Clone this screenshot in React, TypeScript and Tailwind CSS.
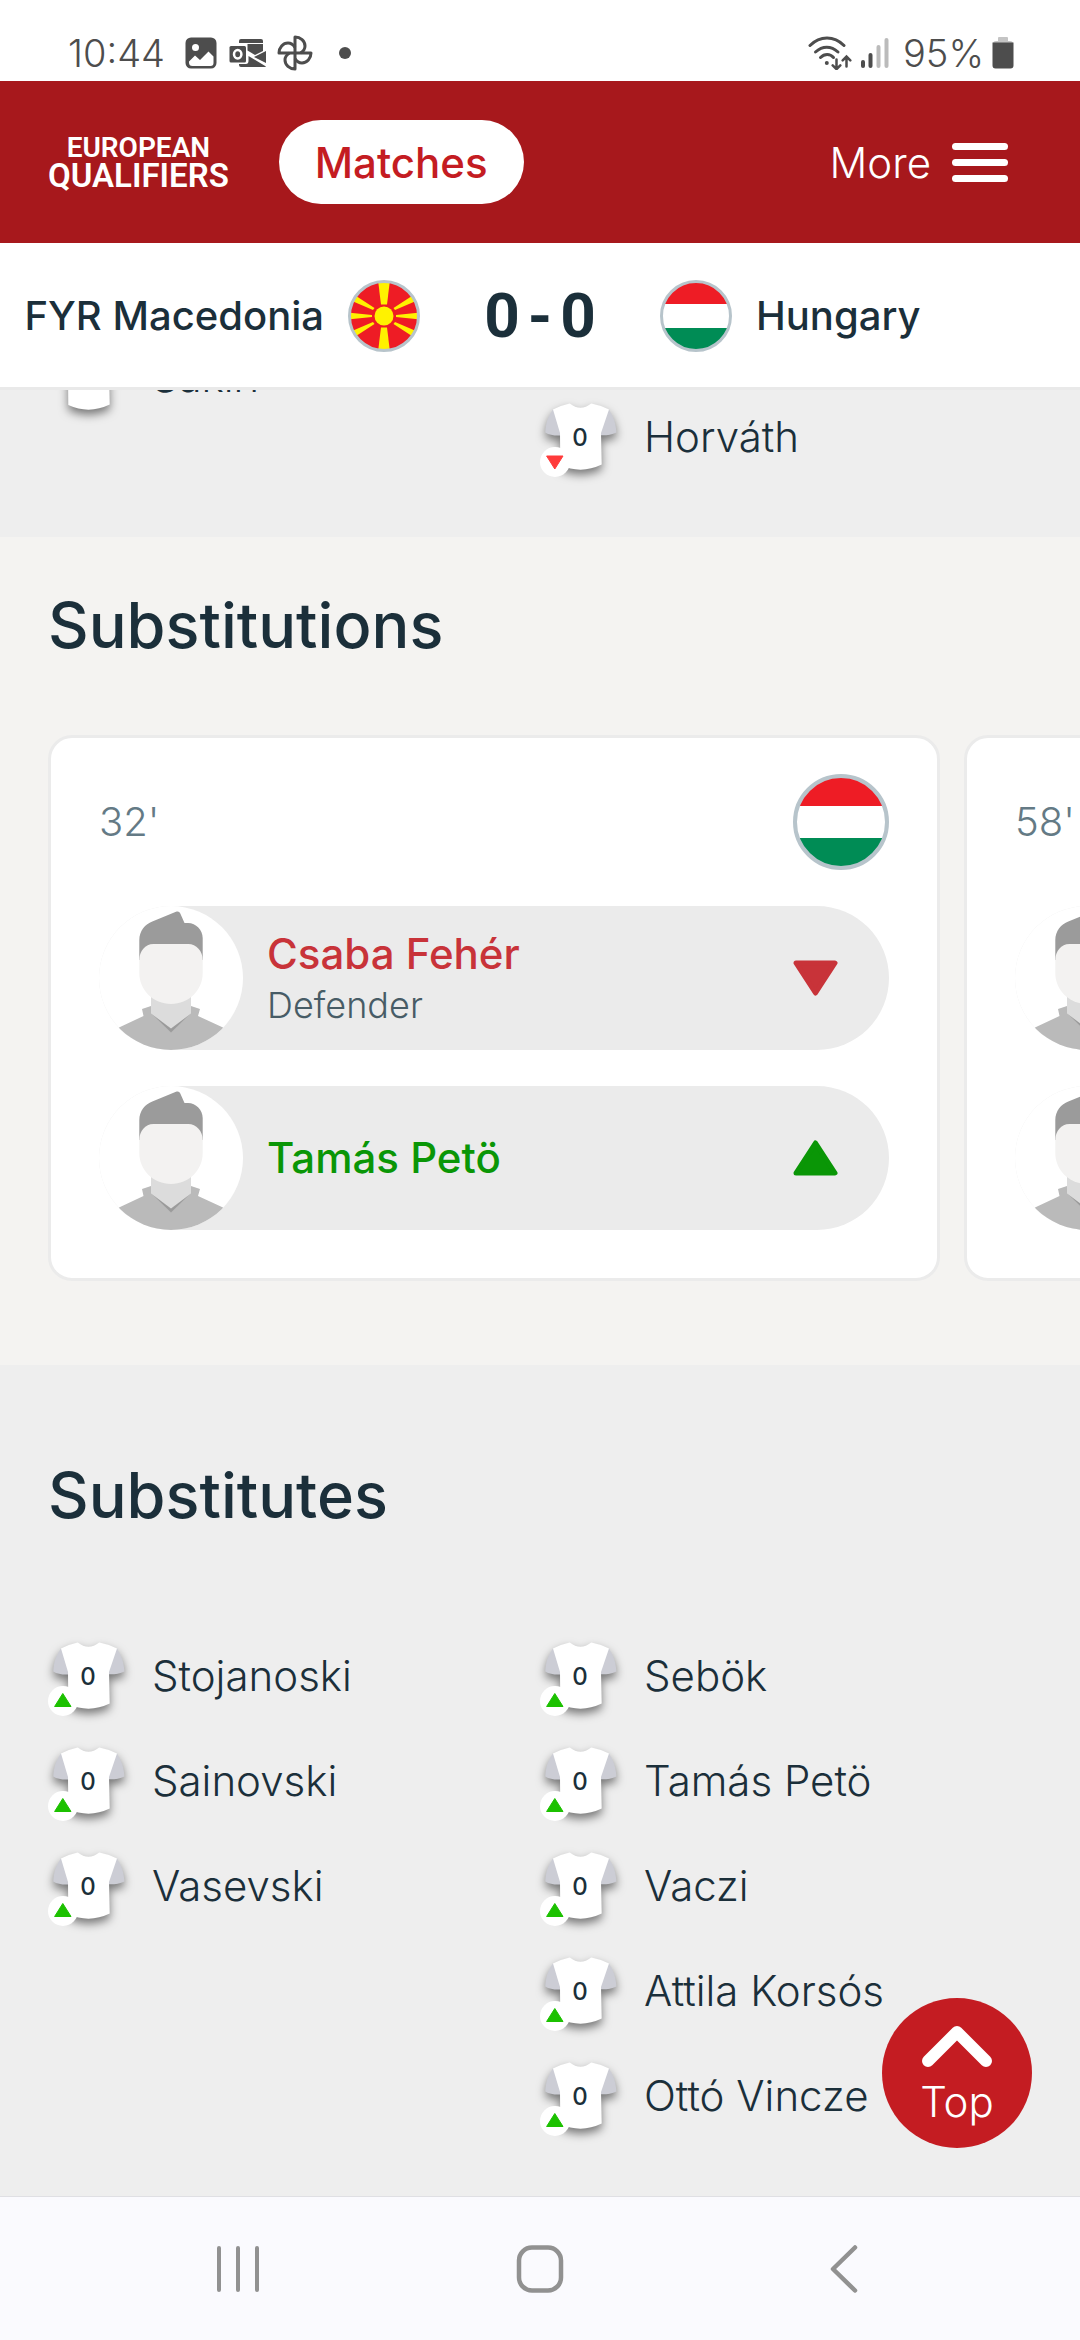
import type { ReactNode } from "react";

type Direction = "in" | "out";

interface SquadPlayer {
  name: string;
  number: number;
  change?: Direction;
}

interface SubstitutionEvent {
  minute: string;
  off: { name: string; position?: string };
  on: { name: string; position?: string };
}

const lineupHome: SquadPlayer[] = [{ name: "Sakiri", number: 0 }];
const lineupAway: SquadPlayer[] = [{ name: "Horváth", number: 0, change: "out" }];

const benchHome: SquadPlayer[] = [
  { name: "Stojanoski", number: 0, change: "in" },
  { name: "Sainovski", number: 0, change: "in" },
  { name: "Vasevski", number: 0, change: "in" },
];

const benchAway: SquadPlayer[] = [
  { name: "Sebök", number: 0, change: "in" },
  { name: "Tamás Petö", number: 0, change: "in" },
  { name: "Vaczi", number: 0, change: "in" },
  { name: "Attila Korsós", number: 0, change: "in" },
  { name: "Ottó Vincze", number: 0, change: "in" },
];

const substitutions: SubstitutionEvent[] = [
  {
    minute: "32'",
    off: { name: "Csaba Fehér", position: "Defender" },
    on: { name: "Tamás Petö" },
  },
  {
    minute: "58'",
    off: { name: "Horváth" },
    on: { name: "Sebök" },
  },
];

/* ---------- flags ---------- */

function HungaryFlag({ className }: { className: string }) {
  return (
    <svg viewBox="0 0 72 72" className={className} role="img" aria-label="Hungary">
      <clipPath id="flag-hun">
        <circle cx="36" cy="36" r="34" />
      </clipPath>
      <g clipPath="url(#flag-hun)">
        <rect width="72" height="72" fill="#fff" />
        <rect width="72" height="24" fill="#ee1c25" />
        <rect y="48" width="72" height="24" fill="#008c55" />
      </g>
      <circle cx="36" cy="36" r="34.5" fill="none" stroke="#b7c4cb" strokeWidth="3" />
    </svg>
  );
}

function MacedoniaFlag({ className }: { className: string }) {
  return (
    <svg viewBox="0 0 72 72" className={className} role="img" aria-label="FYR Macedonia">
      <clipPath id="flag-mkd">
        <circle cx="36" cy="36" r="34" />
      </clipPath>
      <g clipPath="url(#flag-mkd)">
        <rect width="72" height="72" fill="#ee1c25" />
        <g fill="#fff200">
          <path d="M30 0h12l-3 24.500h-6z" />
          <path d="M30 72h12l-3-24.500h-6z" />
          <path d="M0 32.500v7l24-2.500v-2z" />
          <path d="M72 32.500v7l-24-2.500v-2z" />
          <path d="M5 14l21.500 14-1.500 2L4 21z" />
          <path d="M67 14L45.500 28l1.500 2L68 21z" />
          <path d="M5 58l21.500-14-1.500-2L4 51z" />
          <path d="M67 58L45.500 44l1.500-2L68 51z" />
        </g>
        <circle cx="36" cy="36" r="11" fill="#ee1c25" />
        <circle cx="36" cy="36" r="9.500" fill="#fff200" />
      </g>
      <circle cx="36" cy="36" r="34.500" fill="none" stroke="#b7c4cb" strokeWidth="3" />
    </svg>
  );
}

/* ---------- players ---------- */

function Jersey({ number, change }: { number: number; change?: Direction }) {
  return (
    <span className="relative flex size-20 shrink-0 items-center justify-center">
      <svg viewBox="0 0 80 80" className="absolute inset-0 size-20 overflow-visible" aria-hidden>
        <g className="drop-shadow-[0_5px_5px_rgba(0,0,0,0.5)]">
          <path
            d="M13 10.500C8 17 5.500 25 5.300 33.500 9 36 15 36.800 20 36.500L21 20z"
            fill="#cccdd5"
          />
          <path
            d="M69 10.500C73.500 17 76 25 76.400 33.500 72 35.800 66 36.500 61 36.300L60 20z"
            fill="#cccdd5"
          />
          <path
            d="M13 10.500Q21 6.500 29.700 4.600Q40.500 13 51.300 4.600Q61 6.500 69 10.500L61 34L61.700 65.500Q41 75.500 20.300 66L20 34z"
            fill="#fff"
          />
        </g>
        {change && <circle cx="15" cy="63" r="15" fill="#fff" />}
        {change === "in" && (
          <path d="M14.800 55.500l8.200 13H6.600z" fill="#1cc100" stroke="#1cc100" strokeLinejoin="round" />
        )}
        {change === "out" && (
          <path d="M14.800 70l8.200-13H6.600z" fill="#ff3b3b" stroke="#ff3b3b" strokeLinejoin="round" />
        )}
      </svg>
      <span className="relative pb-0.5 text-2xl font-medium">{number}</span>
    </span>
  );
}

function SquadList({ players }: { players: SquadPlayer[] }) {
  return (
    <ul className="flex flex-col gap-[25px]">
      {players.map((player) => (
        <li key={player.name} className="flex items-center gap-6">
          <Jersey number={player.number} change={player.change} />
          <a href="#player" className="pb-1 text-[42px] leading-[54px] font-light whitespace-nowrap">
            {player.name}
          </a>
        </li>
      ))}
    </ul>
  );
}

function Avatar() {
  return (
    <svg viewBox="0 0 144 144" className="size-36 shrink-0 rounded-full bg-white" aria-hidden>
      <path
        d="M20 121.500L44.500 110 43 103l9-3h40l9 3-2 7 25 11.500V144H20z"
        fill="#bababa"
      />
      <path d="M52 107l20 19.500L92 107v-3H52z" fill="#9b9b9b" />
      <path d="M52 90h40v17.500L72 122.500 52 107.500z" fill="#dcdcdc" />
      <path
        d="M40.300 54V34c0-9 6-16 13-18.500L77 5.800c2-.8 3.500-.2 4.300 1.700L85.500 17H89c8 0 14.700 7 14.700 15v22z"
        fill="#9b9b9b"
      />
      <path
        d="M40.300 54c0-9 6-16 14-16h35c8 0 14.400 7 14.400 16v13c0 17-14 31-31.700 31S40.300 84 40.300 67z"
        fill="#f3f2f1"
      />
    </svg>
  );
}

function SubstitutionRow({
  name,
  position,
  direction,
}: {
  name: string;
  position?: string;
  direction: Direction;
}) {
  const isOn = direction === "in";
  return (
    <div className="flex h-36 items-center rounded-full bg-[#ebebeb] pr-[51px]">
      <Avatar />
      <div className="ml-6 min-w-0 flex-1">
        <p
          className={
            isOn
              ? "text-[42px] leading-[54px] font-medium text-[#0a9606]"
              : "text-[42px] leading-[54px] font-medium text-[#c83339]"
          }
        >
          {name}
        </p>
        {position && <p className="text-4xl leading-[48px] font-light text-[#475c66]">{position}</p>}
      </div>
      <svg viewBox="0 0 45 36" className="h-9 w-[45px] shrink-0" aria-hidden>
        {isOn ? (
          <path d="M22.500 3L42 33H3z" fill="#0a9606" stroke="#0a9606" strokeWidth="5" strokeLinejoin="round" />
        ) : (
          <path d="M22.500 33L42 3H3z" fill="#c83339" stroke="#c83339" strokeWidth="5" strokeLinejoin="round" />
        )}
      </svg>
    </div>
  );
}

function SubstitutionCard({ event }: { event: SubstitutionEvent }) {
  return (
    <li className="w-[calc(100%-140px)] shrink-0 rounded-3xl border-[3px] border-[#ebebeb] bg-white px-12 pt-9 pb-12">
      <div className="mb-9 flex items-center justify-between">
        <span className="text-[40px] leading-[54px] font-light text-[#647a85]">{event.minute}</span>
        <HungaryFlag className="size-24" />
      </div>
      <div className="flex flex-col gap-9">
        <SubstitutionRow {...event.off} direction="out" />
        <SubstitutionRow {...event.on} direction="in" />
      </div>
    </li>
  );
}

/* ---------- system bars ---------- */

function StatusBar() {
  return (
    <div className="flex h-[81px] items-center justify-between bg-white pt-6 pr-[66px] pl-[68px] text-[38px] leading-[48px] font-light text-[#4d4d4d]">
      <div className="flex items-center">
        <span>10:44</span>
        <svg viewBox="0 0 32 32" className="ml-5 size-8" aria-hidden>
          <path
            d="M6 .5h20A5.500 5.500 0 0 1 31.500 6v20a5.500 5.500 0 0 1-5.500 5.500H6A5.500 5.500 0 0 1 .5 26V6A5.500 5.500 0 0 1 6 .5z"
            fill="#4d4d4d"
          />
          <circle cx="10.500" cy="10.500" r="3.500" fill="#fff" />
          <path d="M4 24.500l6-6 5 4.500 8.500-8.500 5 5V26a3 3 0 0 1-3 3h-18A3.500 3.500 0 0 1 4 25.500z" fill="#fff" />
        </svg>
        <svg viewBox="0 0 38 28" className="ml-3 h-7 w-[38px]" aria-hidden>
          <path d="M12 0h20a2 2 0 0 1 2 2v2H10V2a2 2 0 0 1 2-2z" fill="#4d4d4d" />
          <path d="M18.500 5H34v7l-8 4-7.500-4.500z" fill="#4d4d4d" />
          <path d="M37 12v12l-12-6z" fill="#4d4d4d" />
          <path d="M10 25h7c1.500 0 2.500-1 2.500-3v-5L37 27.500c-.5.500-1 .5-2 .5H12a2 2 0 0 1-2-2z" fill="#4d4d4d" />
          <rect x=".5" y="7" width="16.500" height="16.500" rx="1.500" fill="#4d4d4d" />
          <ellipse cx="8.700" cy="15.300" rx="3.700" ry="4.200" fill="none" stroke="#fff" strokeWidth="2.500" />
        </svg>
        <svg viewBox="0 0 36 36" className="ml-[10px] size-9" fill="none" stroke="#4d4d4d" strokeWidth="3" strokeLinejoin="round" aria-hidden>
          {[0, 90, 180, 270].map((angle) => (
            <path
              key={angle}
              d="M18 18V2c5.500 0 10 4 10 9 0 3.500-2 5.500-4.500 7"
              transform={`rotate(${angle} 18 18)`}
            />
          ))}
        </svg>
        <span className="ml-[26px] size-3 rounded-full bg-[#4d4d4d]" />
      </div>
      <div className="flex items-center">
        <svg viewBox="0 0 44 34" className="h-[34px] w-11" fill="none" stroke="#4d4d4d" strokeWidth="3" strokeLinecap="round" aria-hidden>
          <path d="M2 9.500C12-.5 26-.5 36 9.500" />
          <path d="M7.500 16c7-6.500 15.500-6.500 22.500 0" />
          <path d="M12.500 21.500c4-4 9.500-4 13 0" />
          <circle cx="18.800" cy="27" r="2" fill="#4d4d4d" stroke="none" />
          <path d="M28.500 23.500V33m-3.800-3.600l3.800 3.800 3.800-3.800" strokeWidth="2.500" />
          <path d="M38.500 30.500V21m-3.800 3.400l3.800-3.800 3.800 3.800" strokeWidth="2.500" />
        </svg>
        <svg viewBox="0 0 28 30" className="ml-[9px] h-[30px] w-7" aria-hidden>
          <rect x="0" y="22" width="4" height="8" rx="2" fill="#4d4d4d" />
          <rect x="7.500" y="15" width="4" height="15" rx="2" fill="#4d4d4d" />
          <rect x="15.500" y="7" width="4" height="23" rx="2" fill="#bbb" />
          <rect x="23.500" y="0" width="4" height="30" rx="2" fill="#bbb" />
        </svg>
        <span className="ml-[14px]">95%</span>
        <svg viewBox="0 0 22 32" className="ml-2 h-8 w-[22px]" aria-hidden>
          <path d="M7 0h8a1 1 0 0 1 1 1v3h2a3 3 0 0 1 3 3H1a3 3 0 0 1 3-3h2V1a1 1 0 0 1 1-1z" fill="#c4c4c4" />
          <path d="M.5 5.500h21V28.500A3 3 0 0 1 18.500 31.500h-15A3 3 0 0 1 .5 28.500z" fill="#4d4d4d" />
        </svg>
      </div>
    </div>
  );
}

function NavButton({ label, children }: { label: string; children: ReactNode }) {
  return (
    <button type="button" aria-label={label} className="flex items-center justify-center">
      <svg viewBox="0 0 48 48" className="size-12" fill="none" stroke="#919191" strokeWidth="4.500" strokeLinecap="round" strokeLinejoin="round" aria-hidden>
        {children}
      </svg>
    </button>
  );
}

function SystemNav() {
  return (
    <nav className="grid h-36 grid-cols-3 border-t border-[#dfdfe3] bg-[#fafafe] px-[87px]">
      <NavButton label="Recent apps">
        <path d="M5 3v42M24 3v42M43 3v42" strokeWidth="4" />
      </NavButton>
      <NavButton label="Home">
        <rect x="3" y="2.500" width="42" height="43" rx="13" />
      </NavButton>
      <NavButton label="Back">
        <path d="M37 2.500L15 24l22 21.500" />
      </NavButton>
    </nav>
  );
}

/* ---------- page ---------- */

export default function App() {
  return (
    <div className="relative min-h-screen overflow-x-hidden bg-[#eee] font-['Inter','Noto_Sans',sans-serif] text-[#1b2f3a]">
      <StatusBar />

      <header className="flex h-[162px] items-center bg-[#a7181c] px-12 text-white">
        <a
          href="#home"
          className="flex flex-col items-center font-['Roboto',sans-serif] text-[28px] leading-7 font-semibold"
        >
          <span>EUROPEAN</span>
          <span className="text-[33px] leading-7">QUALIFIERS</span>
        </a>
        <a
          href="#matches"
          className="ml-[50px] flex h-[84px] items-center rounded-full bg-white px-9 text-[42px] font-medium text-[#c41c22]"
        >
          Matches
        </a>
        <button type="button" className="mr-6 ml-auto flex items-center gap-[21px] text-[42px] font-light">
          More
          <span className="flex w-14 flex-col gap-[9px]">
            <span className="h-[7px] rounded-full bg-white" />
            <span className="h-[7px] rounded-full bg-white" />
            <span className="h-[7px] rounded-full bg-white" />
          </span>
        </button>
      </header>

      <div className="relative z-10 grid h-[147px] grid-cols-[1fr_240px_1fr] items-center border-b-[3px] border-[#e9e9e9] bg-white pt-0.5 text-[40px] font-medium">
        <div className="flex items-center justify-end gap-6 whitespace-nowrap">
          <span>FYR Macedonia</span>
          <MacedoniaFlag className="size-[72px] shrink-0" />
        </div>
        <p className="flex items-center justify-center gap-2 font-['Roboto',sans-serif] text-[62px] leading-[72px] font-bold">
          <span>0</span>
          <span>-</span>
          <span>0</span>
        </p>
        <div className="flex items-center gap-6 whitespace-nowrap">
          <HungaryFlag className="size-[72px] shrink-0" />
          <span>Hungary</span>
        </div>
      </div>

      <main>
        {/* tail of the starting line-ups, scrolled under the score bar */}
        <section className="grid grid-cols-2 items-start overflow-hidden px-12 pt-[9px] pb-[58px]">
          <div className="-mt-[60px]">
            <SquadList players={lineupHome} />
          </div>
          <SquadList players={lineupAway} />
        </section>

        <section className="overflow-hidden bg-[#f4f3f1] pt-[52px] pb-[84px] pl-12">
          <h2 className="mb-[74px] text-[63px] leading-[72px] font-medium">Substitutions</h2>
          <ul className="flex gap-6">
            {substitutions.map((event) => (
              <SubstitutionCard key={event.minute} event={event} />
            ))}
          </ul>
        </section>

        <section className="relative px-12 pt-[94px] pb-[58px]">
          <h2 className="mb-[107px] text-[63px] leading-[72px] font-medium">Substitutes</h2>
          <div className="grid grid-cols-2 items-start">
            <SquadList players={benchHome} />
            <SquadList players={benchAway} />
          </div>
          <button
            type="button"
            className="absolute right-12 bottom-12 flex size-[150px] flex-col items-center rounded-full bg-[#c41c22] pt-[27px] text-[42px] leading-[54px] font-light text-white"
          >
            <svg viewBox="0 0 70 42" className="mb-2 h-[42px] w-[70px] shrink-0" aria-hidden>
              <path d="M6 36L35 7l29 29" fill="none" stroke="#fff" strokeWidth="12" strokeLinecap="round" strokeLinejoin="round" />
            </svg>
            Top
          </button>
        </section>
      </main>

      <SystemNav />
    </div>
  );
}
